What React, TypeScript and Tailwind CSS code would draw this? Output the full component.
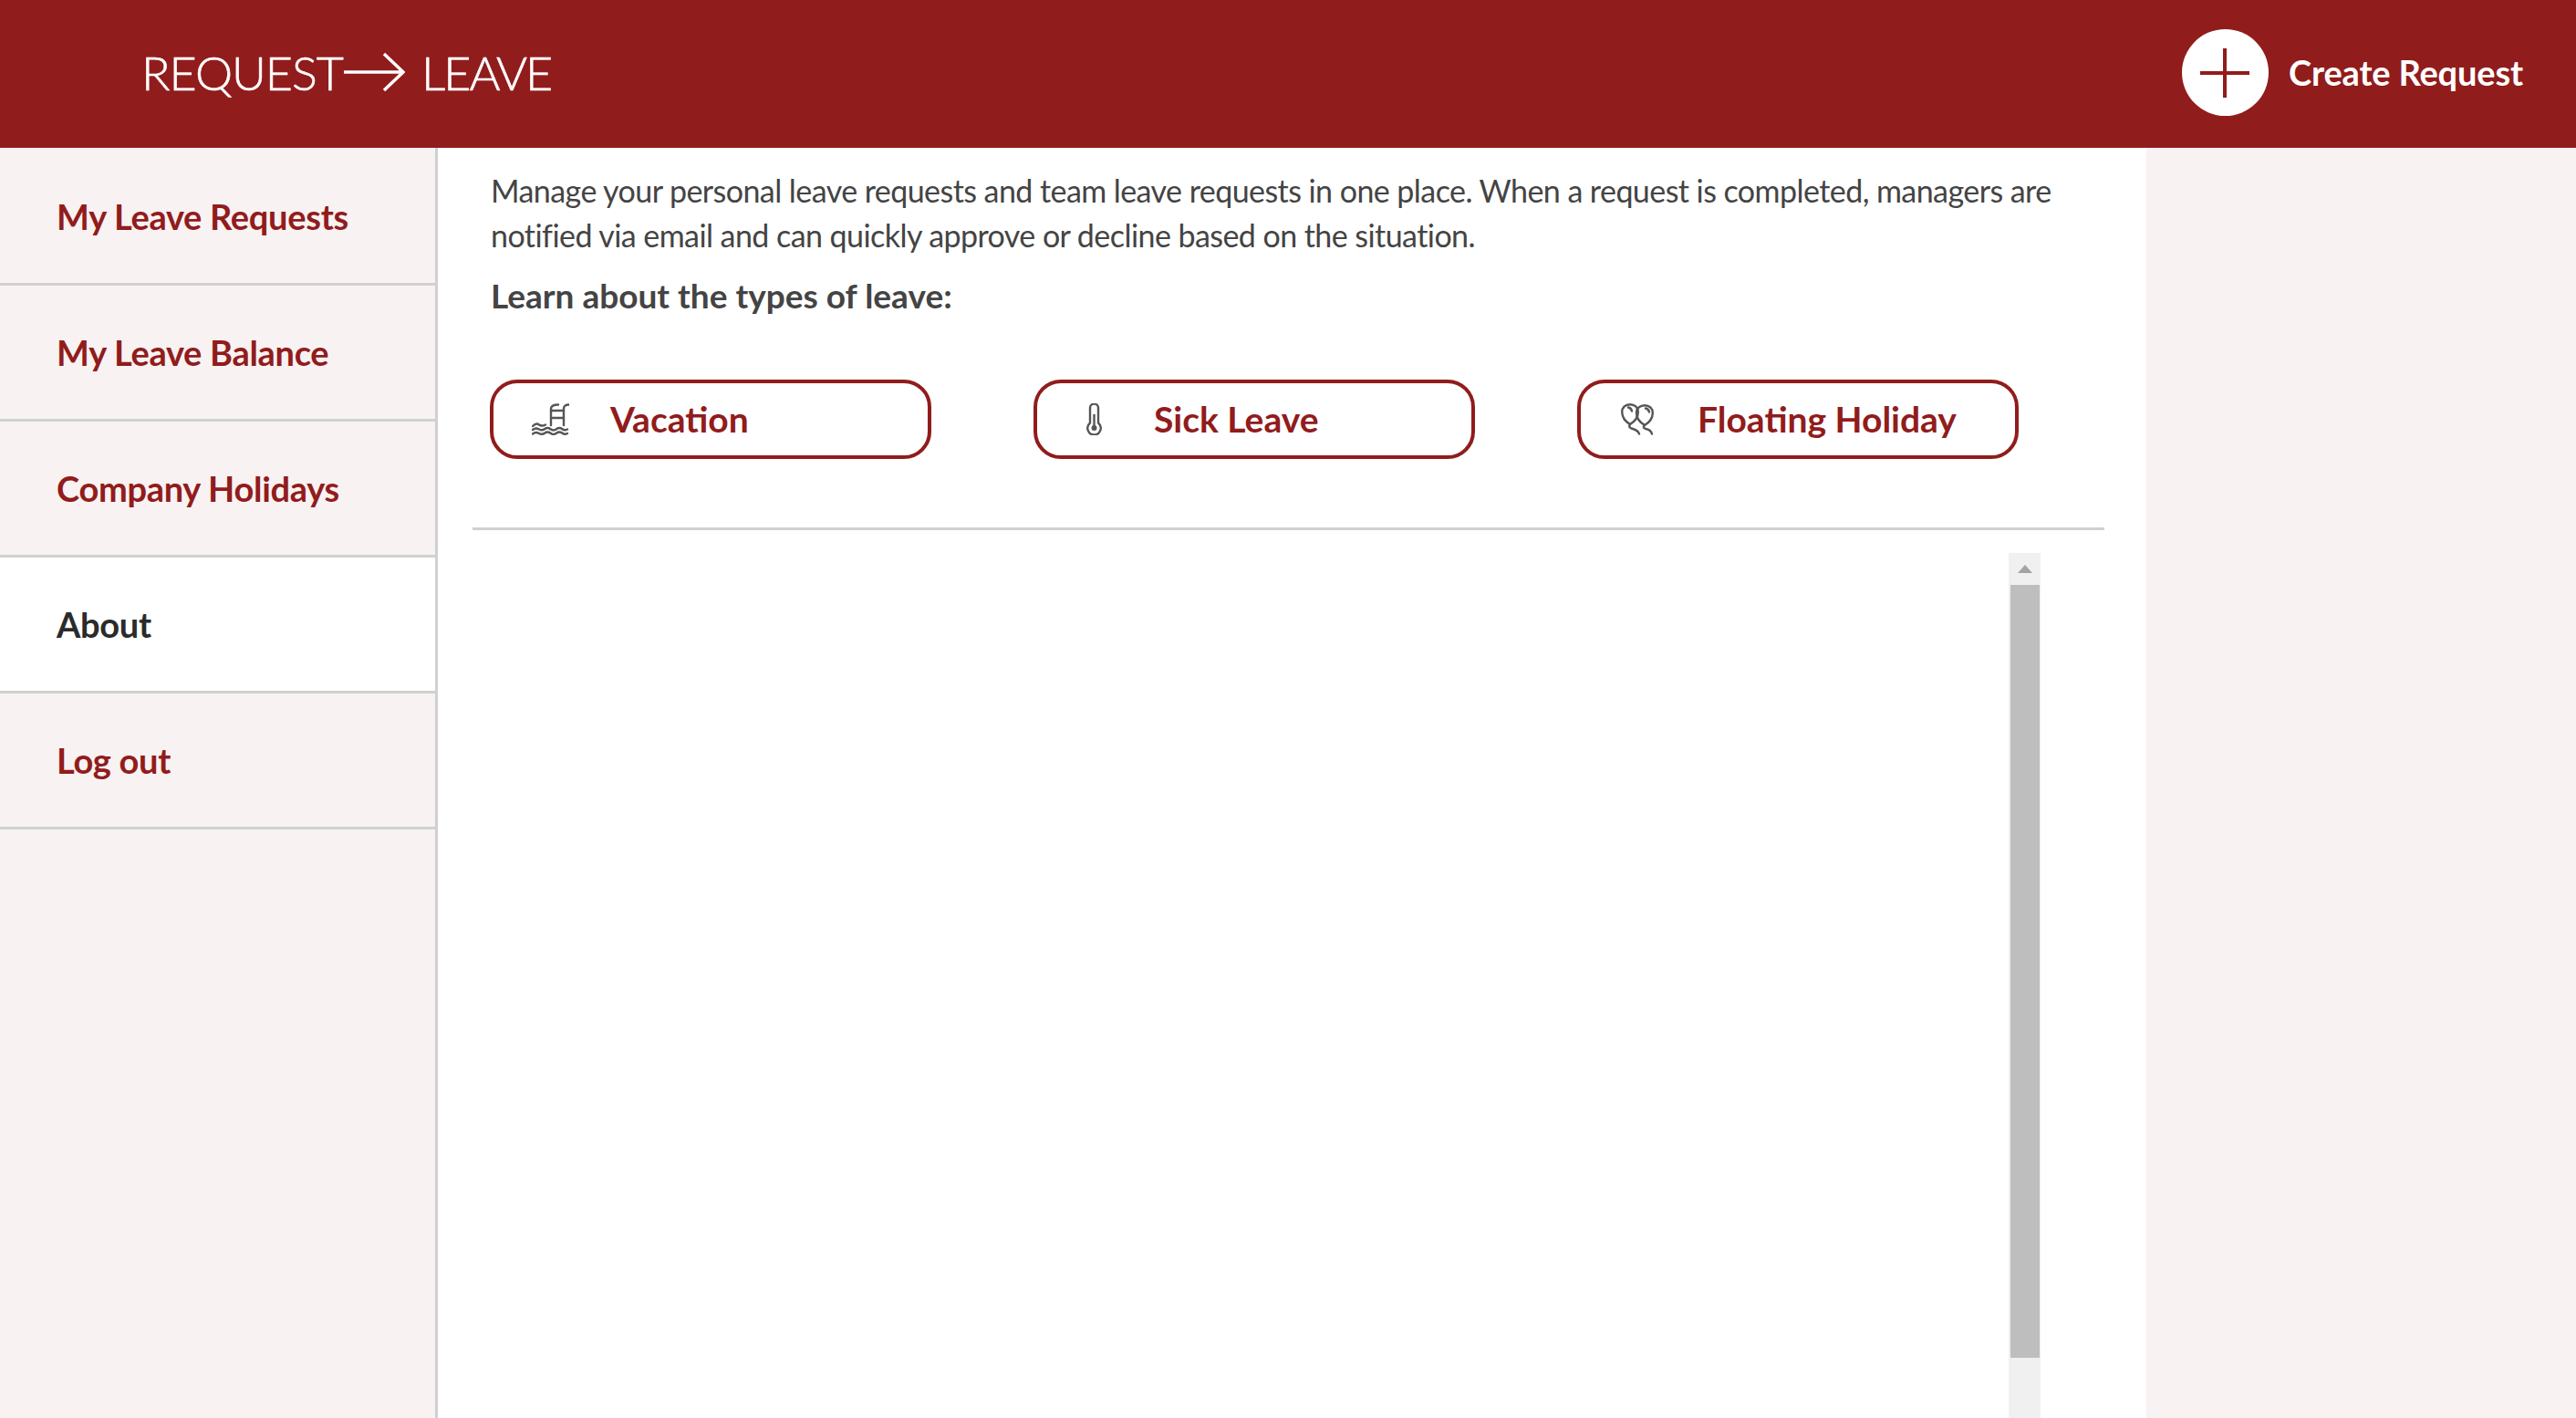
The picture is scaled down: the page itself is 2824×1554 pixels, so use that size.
const ArrowGlyph = () => (
  <svg width="68" height="44" viewBox="0 0 68 44" fill="none" stroke="white" strokeWidth="3.5" className="shrink-0">
    <path d="M1 22h64" />
    <path d="M45 2l21 20-21 20" />
  </svg>
);

const PoolIcon = () => (
  <svg width="41" height="35" viewBox="0 0 41 35" fill="none" stroke="#555" strokeWidth="2.4" strokeLinecap="round">
    <path d="M21 24V6c0-3 3-4.500 8-4.500" />
    <path d="M35 24V6c0-3 2-4.500 5.500-4.500" />
    <path d="M21 8h14M21 16h14" />
    <path d="M1 25c3-3 5-3 7-1.500s4 1.500 7 0" />
    <path d="M1 29c2.500-2 4.500-2 6.500-.8s4.500 1.500 6.500 0 4.500-1.500 6.500 0 4.500 1.500 6.500 0 4.500-1.500 6.500 0 3.500 1.300 5.500 .3" />
    <path d="M1 33.500c2.500-2 4.500-2 6.500-.8s4.500 1.500 6.500 0 4.500-1.500 6.500 0 4.500 1.500 6.500 0 4.500-1.500 6.500 0 3.500 1.300 5.500 .3" />
  </svg>
);

const ThermometerIcon = () => (
  <svg width="17" height="35" viewBox="0 0 17 35" fill="none" stroke="#555" strokeWidth="2.4">
    <path d="M4 21.500V5a4.500 4.500 0 0 1 9 0v16.500a7.300 7.300 0 1 1-9 0z" />
    <path d="M8.500 12v14" />
    <circle cx="8.500" cy="27" r="3" fill="#555" stroke="none" />
  </svg>
);

const BalloonsIcon = () => (
  <svg width="36" height="35" viewBox="0 0 36 35" fill="none" stroke="#555" strokeWidth="2.4" strokeLinecap="round" strokeLinejoin="round">
    <path d="M10 23C5 20 1.200 15 1.200 9.500 1.200 4.500 5 1.200 10 1.200s8.800 3.300 8.800 8.300C18.800 15 15 20 10 23z" />
    <path d="M26 24c-5-3-9-8-9-13.500 0-5 4-8.300 9-8.300s8.800 3.300 8.800 8.300C34.800 16 31 21 26 24z" />
    <path d="M10 23c-1.500 2-1 3.500 1.500 4.500 4 1 7.500 2 8.500 6" />
    <path d="M26 24c-2 1.500-1.500 3 1 4 3.500 .5 6 2 7 5.500" />
    <path d="M8 4.500c2 .3 3.500 1.800 4 4M27 5.500c2 .3 3.500 1.800 4 4" />
  </svg>
);

const navItems = [
  { label: "My Leave Requests" },
  { label: "My Leave Balance" },
  { label: "Company Holidays" },
  { label: "About", active: true },
  { label: "Log out" },
];

const leaveTypes = [
  { label: "Vacation", icon: <PoolIcon /> },
  { label: "Sick Leave", icon: <ThermometerIcon /> },
  { label: "Floating Holiday", icon: <BalloonsIcon /> },
];

export default function App() {
  return (
    <div className="flex h-[1554px] flex-col overflow-hidden bg-white font-['Lato','Liberation_Sans',sans-serif]">
      <header className="flex h-[162px] shrink-0 items-center justify-between bg-[#911c1c] pb-[3px] pl-[155px] pr-[58px]">
        <div className="mb-[2px] flex items-center text-[52px] font-light tracking-[-1px] text-white [-webkit-text-stroke:0.6px_white]">
          <span>REQUEST</span>
          <ArrowGlyph />
          <span className="ml-[18px] tracking-[-2px]">LEAVE</span>
        </div>
        <button className="flex items-center gap-[22px]">
          <span className="relative flex h-[95px] w-[95px] items-center justify-center rounded-full bg-white">
            <span className="h-[54px] w-[4px] bg-[#911c1c]" />
            <span className="absolute h-[4px] w-[54px] bg-[#911c1c]" />
          </span>
          <span className="text-[38px] font-bold tracking-[-0.15px] text-white">Create Request</span>
        </button>
      </header>

      <div className="flex min-h-0 flex-1">
        <nav className="w-[480px] shrink-0 border-r-[3px] border-[#d0d0d0] bg-[#f8f2f2] pt-[2px]">
          {navItems.map((item) => (
            <div
              key={item.label}
              className={`flex h-[149px] items-center border-b-[3px] border-[#d0d0d0] pl-[62px] text-[38px] font-bold tracking-[-0.3px] ${
                item.active ? "bg-white text-[#2b2b2b]" : "text-[#911c1c]"
              }`}
            >
              {item.label}
            </div>
          ))}
        </nav>

        <main className="flex min-w-0 flex-1 flex-col pt-[22px]">
          <div className="pl-[58px] pr-[50px] text-[#444444]">
            <p className="text-[34px] leading-[49px] tracking-[-0.56px]">
              Manage your personal leave requests and team leave requests in one place. When a request is completed, managers are notified via email and can quickly approve or decline based on the situation.
            </p>
            <h2 className="mt-[17px] text-[37px] font-bold leading-[49px]">Learn about the types of leave:</h2>
            <div className="-ml-[1px] mt-[68px] flex gap-[112px]">
              {leaveTypes.map((type) => (
                <button
                  key={type.label}
                  className="flex h-[87px] w-[484px] items-center rounded-[30px] border-[4px] border-[#911c1c] pl-[37px] text-[39px] font-bold text-[#911c1c]"
                >
                  <span className="flex w-[50px] justify-center">{type.icon}</span>
                  <span className="ml-[41px]">{type.label}</span>
                </button>
              ))}
            </div>
          </div>
          <div className="ml-[38px] mr-[46px] mt-[75px] h-[3px] shrink-0 bg-[#d0d0d0]" />
          <div className="mr-[116px] mt-[25px] flex min-h-0 flex-1 justify-end">
            <div className="flex w-[35px] flex-col items-center bg-[#f0f0f0]">
              <div className="flex h-[35px] w-full shrink-0 items-center justify-center">
                <span className="h-0 w-0 border-x-[8px] border-b-[9px] border-x-transparent border-b-[#a3a3a3]" />
              </div>
              <div className="h-[847px] w-[32px] bg-[#bebebe]" />
            </div>
          </div>
        </main>

        <aside className="w-[471px] shrink-0 bg-[#f8f2f2]" />
      </div>
    </div>
  );
}
